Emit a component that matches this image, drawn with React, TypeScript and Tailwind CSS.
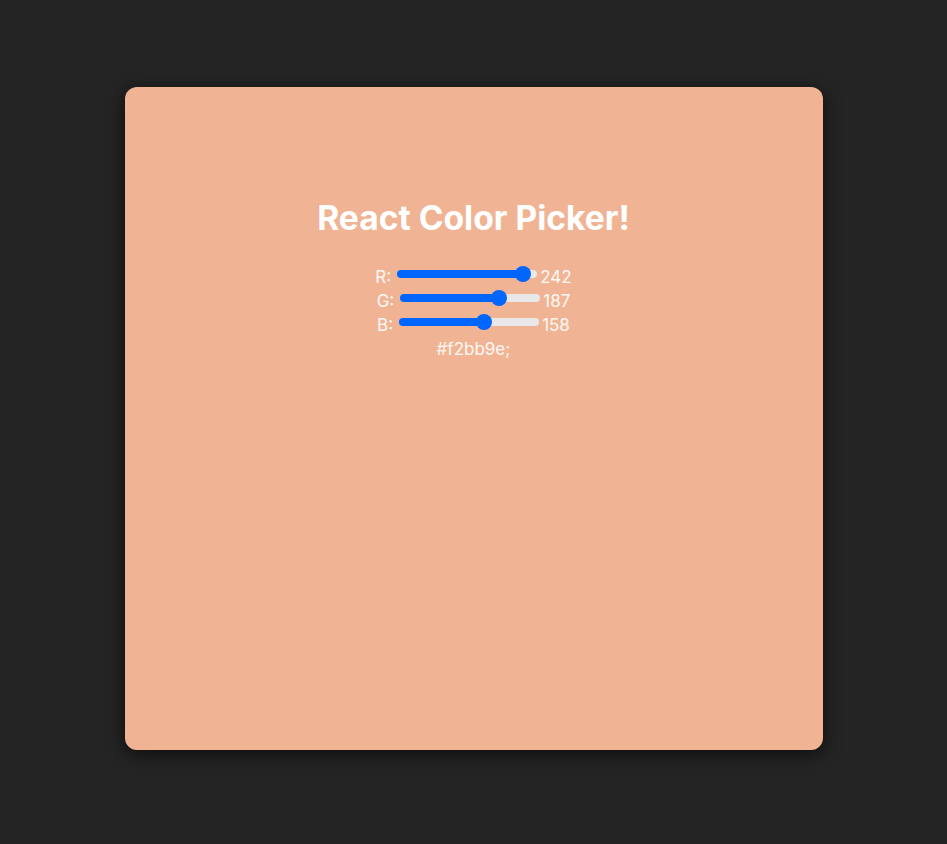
import { useState } from 'react'

interface SliderRowProps {
  label: string
  value: number
  onChange: (v: number) => void
}

function SliderRow({ label, value, onChange }: SliderRowProps) {
  // blue fill runs up to the thumb centre (thumb is 16px on a 140px track)
  const fillPx = 8 + (124 * value) / 255

  return (
    <div className="flex items-center justify-center h-6">
      <span>{label}:</span>
      <input
        type="range"
        min={0}
        max={255}
        value={value}
        onChange={e => onChange(Number(e.target.value))}
        className="ml-[6px] mb-[5px] w-[140px] h-[8px] appearance-none rounded-full outline-none cursor-pointer [&::-webkit-slider-thumb]:appearance-none [&::-webkit-slider-thumb]:w-4 [&::-webkit-slider-thumb]:h-4 [&::-webkit-slider-thumb]:rounded-full [&::-webkit-slider-thumb]:bg-[#0066ff] [&::-webkit-slider-thumb]:border-0"
        style={{
          background: `linear-gradient(to right, #0066ff ${fillPx}px, #e8e8e8 ${fillPx}px)`,
        }}
      />
      <span className="ml-[3px]">{value}</span>
    </div>
  )
}

function toHex(n: number) {
  return n.toString(16).padStart(2, '0')
}

export default function App() {
  const [r, setR] = useState(242)
  const [g, setG] = useState(187)
  const [b, setB] = useState(158)

  const hex = `#${toHex(r)}${toHex(g)}${toHex(b)}`

  return (
    <div
      className="min-h-[844px] bg-[#242424] flex justify-center pt-[87px] text-white/90 text-[17px] leading-6"
      style={{ fontFamily: 'Inter, "Noto Sans", sans-serif' }}
    >
      <div className="w-[698px] h-[663px] rounded-xl bg-[#f0b494] shadow-[0_4px_18px_rgba(0,0,0,0.65)] pt-[113px] flex flex-col items-center">
        <h1 className="text-[33.6px] font-bold leading-[1.1] text-white mb-[28px]">
          React Color Picker!
        </h1>
        <div className="flex flex-col">
          <SliderRow label="R" value={r} onChange={setR} />
          <SliderRow label="G" value={g} onChange={setG} />
          <SliderRow label="B" value={b} onChange={setB} />
          <div className="text-center h-6">{hex};</div>
        </div>
      </div>
    </div>
  )
}
